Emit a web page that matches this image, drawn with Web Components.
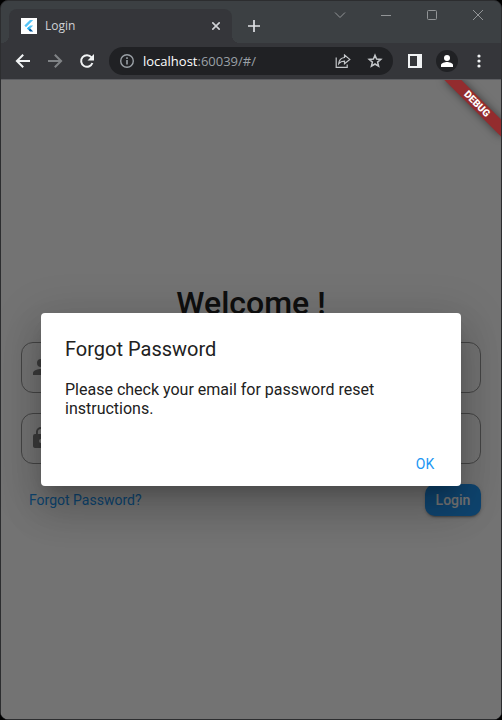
<!DOCTYPE html>
<html lang="en">
<head>
<meta charset="utf-8">
<meta name="viewport" content="width=device-width, initial-scale=1">
<title>Login</title>
<style>
  html, body { height: 100%; }
  body { margin: 0; background: #000; }
</style>
</head>
<body>
<browser-window>
  <tab-strip slot="tabs"><browser-tab>Login</browser-tab></tab-strip>
  <tool-bar slot="toolbar"><address-bar host="localhost" path=":60039/#/"></address-bar></tool-bar>
  <login-page>
    <text-field label="Username" icon="person"></text-field>
    <text-field label="Password" icon="lock" type="password"></text-field>
  </login-page>
  <alert-dialog heading="Forgot Password" action="OK">Please check your email for password reset instructions.</alert-dialog>
  <debug-banner>DEBUG</debug-banner>
</browser-window>

<script>
const define = (name, render) => customElements.define(name, class extends HTMLElement {
  constructor() {
    super();
    this.attachShadow({ mode: 'open' });
  }
  connectedCallback() {
    this.shadowRoot.innerHTML = '<style>*{box-sizing:border-box}button{border:0;padding:0;margin:0;background:none;font:inherit;color:inherit;cursor:pointer}svg{display:block}</style>' + render(this);
  }
});

define('browser-window', () => `
<style>
  :host { display: flex; flex-direction: column; box-sizing: border-box; min-height: 100vh;
    border: 1px solid #2c2d2f; border-radius: 8px; overflow: hidden; background: #35363a; }
  main { position: relative; flex: 1; display: grid; overflow: hidden; background: #fafafa;
    font-family: Roboto, sans-serif; }
</style>
<slot name="tabs"></slot>
<slot name="toolbar"></slot>
<main><slot></slot></main>`);

define('tab-strip', () => `
<style>
  :host { display: flex; height: 42px; background: #3c4043; color: #dfe1e5; }
  .tabs { flex: 1; min-width: 0; display: flex; align-items: flex-end; padding-left: 8px; }
  .new { width: 28px; height: 34px; margin-left: 8px; display: grid; place-items: center; }
  .caption { display: flex; height: 28px; color: #929597; }
  .caption button { width: 46px; display: grid; place-items: center; }
</style>
<div class="tabs"><slot></slot>
  <button class="new" aria-label="New tab"><svg width="12" height="12" viewBox="0 0 12 12"><path d="M6 0v12M0 6h12" stroke="currentColor" stroke-width="1.700"/></svg></button>
</div>
<div class="caption">
  <button aria-label="Search tabs"><svg width="12" height="12" viewBox="0 0 12 12" fill="none" stroke="currentColor"><path d="M1 3.5l5 5 5-5"/></svg></button>
  <button aria-label="Minimize"><svg width="10" height="10" viewBox="0 0 10 10" fill="none" stroke="currentColor"><path d="M0 5.5h10"/></svg></button>
  <button aria-label="Maximize"><svg width="10" height="10" viewBox="0 0 10 10" fill="none" stroke="currentColor"><rect x=".5" y=".5" width="9" height="9" rx="1"/></svg></button>
  <button aria-label="Close"><svg width="10" height="10" viewBox="0 0 10 10" fill="none" stroke="currentColor"><path d="M0 0l10 10M10 0L0 10"/></svg></button>
</div>`);

define('browser-tab', () => `
<style>
  :host { position: relative; display: flex; align-items: center; gap: 8px; flex: 0 1 223px; box-sizing: border-box;
    height: 34px; padding: 0 9px 0 12px; border-radius: 8px 8px 0 0; background: #35363a;
    font: 12px/16px "Open Sans", "Noto Sans", sans-serif; color: #d0d2d6; }
  :host::before, :host::after { content: ""; position: absolute; bottom: 0; width: 8px; height: 8px; }
  :host::before { right: 100%; background: radial-gradient(circle at 0 0, transparent 8px, #35363a 8px); }
  :host::after { left: 100%; background: radial-gradient(circle at 100% 0, transparent 8px, #35363a 8px); }
  span { flex: 1; min-width: 0; }
  button { width: 14px; height: 16px; display: grid; place-items: center; }
</style>
<svg width="16" height="16" viewBox="0 0 16 16" aria-hidden="true"><path fill="#fff" d="M0 0h16v16H0z"/><path fill="#54c5f8" d="M9 2h3.2L5 9.2 3.4 7.6zM9 7.4h3.2l-3 3L7.600 12 6 10.400z"/><path fill="#29b6f6" d="M6 10.400l1.600-1.600 1.600 1.600L7.600 12z"/><path fill="#01579b" d="M7.600 12l1.600-1.600 3 3.100H9z"/></svg>
<span><slot></slot></span>
<button aria-label="Close tab"><svg width="8" height="8" viewBox="0 0 8 8"><path d="M.3.3l7.400 7.400M7.700.3L.3 7.700" stroke="currentColor" stroke-width="1.600"/></svg></button>`);

define('tool-bar', () => `
<style>
  :host { display: flex; align-items: center; gap: 4px; box-sizing: border-box; height: 37px; padding: 0 8px;
    background: #35363a; border-bottom: 1px solid #5c5d61; color: #f1f3f4; }
  button { width: 28px; height: 28px; flex: none; display: grid; place-items: center; }
  .off { color: #808386; }
  slot { display: block; flex: 1; min-width: 0; margin: 0 4px; }
  .avatar { width: 22px; height: 22px; border-radius: 50%; background: #202124; display: grid; place-items: center; }
</style>
<button aria-label="Back"><svg width="16" height="16" viewBox="0 0 16 16" fill="none" stroke="currentColor" stroke-width="2"><path d="M15 8H2.500M8.200 1.700L1.900 8l6.300 6.300"/></svg></button>
<button class="off" aria-label="Forward"><svg width="16" height="16" viewBox="0 0 16 16" fill="none" stroke="currentColor" stroke-width="2"><path d="M1 8h12.500M7.800 1.700L14.100 8l-6.300 6.300"/></svg></button>
<button aria-label="Reload"><svg width="16" height="16" viewBox="0 0 16 16"><path d="M13.400 10a5.800 5.800 0 1 1-.9-5.600" fill="none" stroke="currentColor" stroke-width="2"/><path d="M15 1v6.500H8.500z" fill="currentColor"/></svg></button>
<slot></slot>
<button aria-label="Side panel"><svg width="14" height="14" viewBox="0 0 14 14"><path fill="currentColor" fill-rule="evenodd" d="M0 0h14v14H0zM2 2v10h7V2z"/></svg></button>
<button aria-label="Profile"><span class="avatar"><svg width="12" height="12" viewBox="0 0 12 12" fill="#fff"><circle cx="6" cy="3" r="3"/><path d="M0 12v-2c0-2 4-3 6-3s6 1 6 3v2z"/></svg></span></button>
<button aria-label="Menu"><svg width="4" height="14" viewBox="0 0 4 14" fill="currentColor"><circle cx="2" cy="2" r="1.600"/><circle cx="2" cy="7" r="1.600"/><circle cx="2" cy="12" r="1.600"/></svg></button>`);

define('address-bar', el => `
<style>
  :host { display: flex; align-items: center; gap: 4px; box-sizing: border-box; height: 28px; padding: 0 4px 0 10px;
    border-radius: 14px; background: #202124; color: #9aa0a6; font: 13px/20px "Open Sans", "Noto Sans", sans-serif; }
  .url { flex: 1; min-width: 0; padding-left: 4px; white-space: nowrap; overflow: hidden; outline: 0; }
  b { font-weight: 400; color: #fff; }
  button { width: 28px; height: 28px; flex: none; display: grid; place-items: center; color: #c4c7ca; }
</style>
<svg width="16" height="16" viewBox="0 0 16 16" fill="none" stroke="currentColor"><circle cx="8" cy="8" r="6.300" stroke-width="1.400"/><path d="M8 7v4.500M8 4.300v1.700" stroke-width="1.600"/></svg>
<div class="url" role="textbox" aria-label="Address" tabindex="0"><b>${el.getAttribute('host')}</b>${el.getAttribute('path')}</div>
<button aria-label="Share"><svg width="16" height="16" viewBox="0 0 16 16" fill="none" stroke="currentColor" stroke-width="1.200"><path d="M1.200 4.500v9.900h11v-3"/><path d="M9.500 2l5.300 4.400-5.300 4.400V8.200C7 8.200 5.200 8.800 3.700 10.700 4 7.200 6 4.900 9.500 4.500z"/></svg></button>
<button aria-label="Bookmark"><svg width="16" height="16" viewBox="0 0 16 16" fill="none" stroke="currentColor" stroke-width="1.500"><path d="M8 2.200l1.600 3.900 4.200.3-3.200 2.700 1 4.100L8 11l-3.600 2.200 1-4.100-3.200-2.700 4.200-.3z"/></svg></button>`);

define('login-page', () => `
<style>
  :host { grid-area: 1 / 1; display: block; }
  form { min-height: 100%; display: flex; flex-direction: column; justify-content: center; gap: 20px; padding: 0 20px; }
  h1 { margin: 0; font-size: 32px; line-height: 38px; font-weight: 500; text-align: center; color: #212121; }
  .row { display: flex; align-items: center; justify-content: space-between; font-size: 14px; line-height: 16px; }
  a { padding: 8px; color: #2196f3; text-decoration: none; font-weight: 400; }
  .login { height: 32px; min-width: 56px; padding: 0 10px; border-radius: 10px; background: #2196f3; color: #fff; font-weight: 500;
    box-shadow: 0 3px 1px -2px #0003, 0 2px 2px #0002, 0 1px 5px #0002; }
</style>
<form>
  <h1>Welcome !</h1>
  <slot></slot>
  <div class="row"><a href="#/forgot">Forgot Password?</a><button class="login" type="button">Login</button></div>
</form>`);

const fieldIcons = {
  person: 'M12 12a4 4 0 1 0 0-8 4 4 0 0 0 0 8zm0 2c-2.700 0-8 1.300-8 4v2h16v-2c0-2.700-5.300-4-8-4z',
  lock: 'M18 8h-1V6A5 5 0 0 0 7 6v2H6a2 2 0 0 0-2 2v10c0 1.100.9 2 2 2h12a2 2 0 0 0 2-2V10a2 2 0 0 0-2-2zm-6 9a2 2 0 1 1 0-4 2 2 0 0 1 0 4zm3.100-9H8.900V6a3.100 3.100 0 0 1 6.200 0v2z'
};
define('text-field', el => `
<style>
  :host { display: block; }
  label { display: flex; align-items: center; gap: 8px; height: 51px; padding: 0 7px; border: 1px solid #969696; border-radius: 12px; }
  svg { flex: none; fill: #808080; }
  input { flex: 1; min-width: 0; height: 100%; border: 0; outline: 0; background: none; font: 16px/20px Roboto, sans-serif; }
</style>
<label><svg width="24" height="24" viewBox="0 0 24 24"><path fill-rule="evenodd" d="${fieldIcons[el.getAttribute('icon')]}"/></svg>
<input type="${el.getAttribute('type') || 'text'}" aria-label="${el.getAttribute('label')}"></label>`);

define('alert-dialog', el => `
<style>
  :host { position: absolute; inset: 0; display: flex; align-items: center; padding: 24px 40px; background: rgba(0, 0, 0, .54); }
  section { flex: 1; min-width: 0; border-radius: 4px; background: #fff; color: #212121;
    box-shadow: 0 11px 15px -7px rgba(0,0,0,.2), 0 24px 38px 3px rgba(0,0,0,.14), 0 9px 46px 8px rgba(0,0,0,.12); }
  h2 { margin: 0; padding: 24px 24px 0; font-size: 20px; line-height: 25px; font-weight: 400; }
  p { margin: 0; padding: 18px 24px 24px; font-size: 16px; line-height: 19px; }
  .actions { display: flex; justify-content: flex-end; padding: 6px 8px; }
  .actions button { height: 32px; min-width: 56px; color: #2196f3; font-size: 14px; line-height: 16px; }
</style>
<section role="alertdialog" aria-modal="true" aria-labelledby="t" aria-describedby="d">
  <h2 id="t">${el.getAttribute('heading')}</h2>
  <p id="d"><slot></slot></p>
  <div class="actions"><button>${el.getAttribute('action')}</button></div>
</section>`);

define('debug-banner', () => `
<style>
  :host { position: absolute; top: 0; right: 0; width: 0; height: 0; transform: rotate(45deg); }
  div { position: absolute; top: 28px; left: -40px; width: 80px; height: 12px; background: #932c2e;
    box-shadow: 0 0 8px rgba(0, 0, 0, .5); color: #fff; font-size: 10px; line-height: 12px; font-weight: 900; text-align: center; }
</style>
<div><slot></slot></div>`);
</script>
</body>
</html>
